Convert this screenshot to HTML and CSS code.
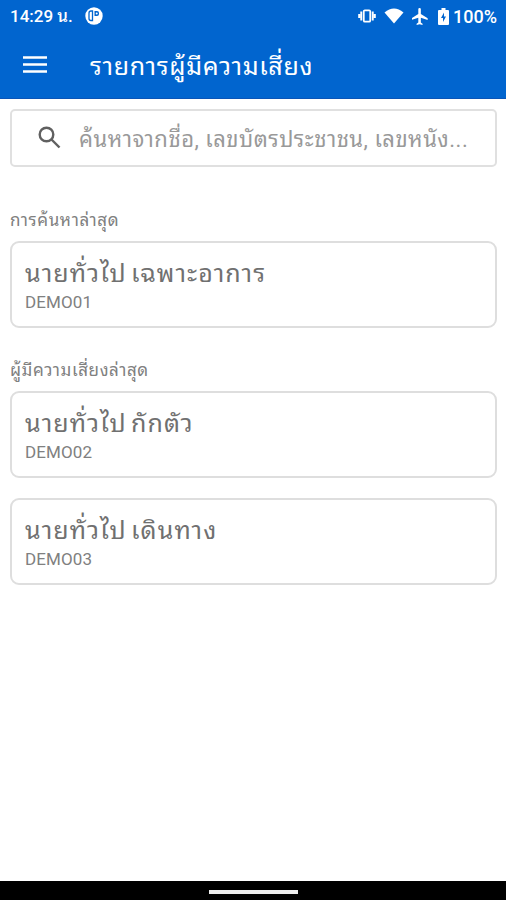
FILE: index.html
```
<!DOCTYPE html>
<html lang="th">
<head>
    <meta charset="UTF-8">
    <meta name="viewport" content="width=device-width, initial-scale=1.0">
    <title>รายการผู้มีความเสี่ยง</title>
    <link rel="stylesheet" href="styles.css">
</head>
<body>

<!-- Status bar and app bar -->
<header class="header">
    <div class="status-bar">
        <span class="clock">14:29 น.</span>
        <svg class="app-icon" width="18" height="18" viewBox="0 0 18 18">
            <circle cx="9" cy="9" r="8.7" fill="#fff"/>
            <path d="M7.500 4H6a2 2 0 0 0-2 2v5.500a2 2 0 0 0 2 2h1.500z" fill="none" stroke="#0165cf" stroke-width="1.300"/>
            <path d="M9.500 4H12a2 2 0 0 1 2 2v1a2 2 0 0 1-2 2H9.500z" fill="#0165cf"/>
            <circle cx="11.700" cy="6.500" r="1" fill="#fff"/>
        </svg>
        <div class="status-icons">
            <svg width="18" height="16" viewBox="0 0 18 16" fill="none" stroke="#fff">
                <rect x="5.800" y="2.300" width="6.400" height="11.400" rx="1" stroke-width="1.700"/>
                <path d="M3.300 3.500v9M14.700 3.500v9M1.200 6v4M16.800 6v4" stroke-width="2"/>
            </svg>
            <svg width="20" height="16" viewBox="0 0 20 16">
                <path d="M0.500 4.500Q10-3.500 19.500 4.500L10 15.500z" fill="#fff"/>
            </svg>
            <svg width="16" height="17" viewBox="3 2 18 20">
                <path d="M21 16v-2l-8-5V3.500a1.500 1.500 0 0 0-3 0V9l-8 5v2l8-2.500V19l-2 1.500V22l3.500-1 3.500 1v-1.500L13 19v-5.500z" fill="#fff"/>
            </svg>
            <svg class="battery-icon" width="11" height="17" viewBox="0 0 11 17">
                <path d="M3.500 0h4v2H10a1 1 0 0 1 1 1v13a1 1 0 0 1-1 1H1a1 1 0 0 1-1-1V3a1 1 0 0 1 1-1h2.500z" fill="#fff"/>
                <path d="M6 4.500L3 10h2v4l3-5.500H6z" fill="#0165cf"/>
            </svg>
        </div>
        <span class="battery">100%</span>
    </div>
    <div class="app-bar">
        <svg class="menu-icon" width="24" height="18" viewBox="0 0 24 18">
            <path d="M0 1.500h24M0 8.500h24M0 15.500h24" stroke="#fff" stroke-width="2.600"/>
        </svg>
        <h1>รายการผู้มีความเสี่ยง</h1>
    </div>
</header>

<main class="content">
    <div class="search-box">
        <svg width="24" height="24" viewBox="0 0 24 24" fill="none" stroke="#606060" stroke-width="2.400">
            <circle cx="8.500" cy="8.500" r="6.800"/>
            <path d="M13.500 13.500L21.500 21.500"/>
        </svg>
        <span class="placeholder">ค้นหาจากชื่อ, เลขบัตรประชาชน, เลขหนัง...</span>
    </div>

    <h2 class="recent">การค้นหาล่าสุด</h2>
    <div class="card">
        <p class="name">นายทั่วไป เฉพาะอาการ</p>
        <p class="code">DEMO01</p>
    </div>

    <h2>ผู้มีความเสี่ยงล่าสุด</h2>
    <div class="card">
        <p class="name">นายทั่วไป กักตัว</p>
        <p class="code">DEMO02</p>
    </div>
    <div class="card">
        <p class="name">นายทั่วไป เดินทาง</p>
        <p class="code">DEMO03</p>
    </div>
</main>

<!-- System navigation -->
<footer class="nav-bar">
    <div class="handle"></div>
</footer>

</body>
</html>
```
FILE: styles.css
```
* {
    box-sizing: border-box;
}
body {
    font-family: Roboto, "Noto Sans Thai Looped", "Noto Looped Thai", Loma, Waree, Garuda, "Noto Sans", sans-serif;
    display: flex;
    flex-direction: column;
    height: 900px;
    background-color: #fff;
    margin: 0;
    overflow: hidden;
}
.header {
    height: 99px;
    background-color: #0165cf;
    border-bottom: 1px solid #0a55b8;
    color: #fff;
}
.status-bar {
    display: flex;
    align-items: center;
    height: 32px;
    padding: 0 9px 0 10px;
    font-size: 17px;
    font-weight: 500;
}
.clock {
    width: 75px;
    padding-bottom: 3px;
    white-space: nowrap;
}
.status-icons {
    display: flex;
    align-items: center;
    gap: 8px;
    margin-left: auto;
}
.battery-icon {
    margin-left: 2px;
}
.battery {
    margin-left: 4px;
    font-size: 18px;
}
.app-bar {
    display: flex;
    align-items: center;
    height: 66px;
    padding-left: 23px;
}
h1 {
    margin: 0 0 0 43px;
    padding-bottom: 2px;
    font-size: 25px;
    font-weight: 400;
    letter-spacing: 0.7px;
    white-space: nowrap;
}
.content {
    flex: 1;
    padding: 10px 9px 0 10px;
}
.search-box {
    display: flex;
    align-items: center;
    height: 58px;
    padding-left: 26px;
    border: 2px solid #e0e0e0;
    border-radius: 5px;
}
.placeholder {
    margin-left: 17px;
    padding-bottom: 2px;
    font-size: 22px;
    letter-spacing: 0.5px;
    color: #999;
    white-space: nowrap;
}
h2 {
    height: 24px;
    margin: 30px 0 9px;
    font-size: 17px;
    line-height: 24px;
    font-weight: 400;
    letter-spacing: 0.6px;
    color: #808080;
}
.recent {
    margin-top: 41px;
}
.card {
    height: 87px;
    margin-bottom: 20px;
    padding: 14px 13px;
    border: 2px solid #dedede;
    border-radius: 9px;
}
.card p {
    margin: 0;
    white-space: nowrap;
}
.name {
    height: 34px;
    font-size: 25px;
    line-height: 34px;
    letter-spacing: 1.1px;
    word-spacing: -3px;
    color: #707070;
}
.code {
    font-size: 17px;
    line-height: 22px;
    letter-spacing: 0.1px;
    color: #808080;
}
.nav-bar {
    display: flex;
    align-items: center;
    justify-content: center;
    height: 19px;
    background-color: #000;
}
.handle {
    width: 89px;
    height: 4px;
    margin-top: 2px;
    background-color: #eee;
}
```
